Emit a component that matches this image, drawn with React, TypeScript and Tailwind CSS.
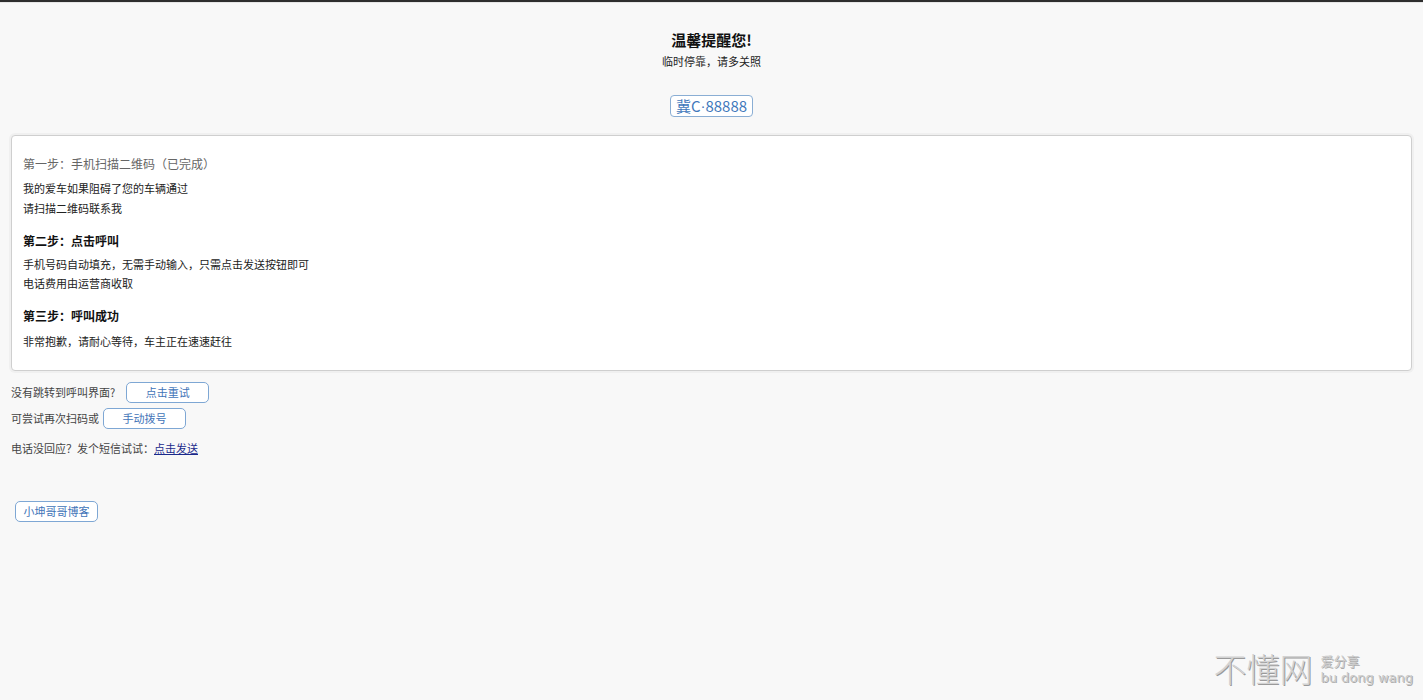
import React from "react";

const font = { fontFamily: '"Noto Sans CJK SC", "Noto Sans", sans-serif' };

function Btn({ children, className = "" }: { children: React.ReactNode; className?: string }) {
  return (
    <button
      className={
        "h-[21px] w-[83px] rounded-[5px] border border-[#7ea7d4] bg-white text-[11px] leading-[19px] text-[#3f74b8] " +
        className
      }
    >
      {children}
    </button>
  );
}

export default function App() {
  return (
    <div className="min-h-[700px] w-full bg-[#f8f8f8] text-[#222] relative overflow-hidden" style={font}>
      <div className="h-[2px] bg-[#2e2e2e]" />
      <div className="h-[1px] bg-[#e6e6e6]" />
      <div className="flex flex-col items-center pt-[27px]">
        <div className="text-[15px] font-bold leading-[20px] text-[#111]">温馨提醒您!</div>
        <div className="mt-[1px] text-[11px] leading-[20px] text-[#222]">临时停靠，请多关照</div>
        <div className="mt-[24px] flex h-[22px] items-center rounded-[4px] border border-[#8aaed4] bg-white px-[5px] text-[15px] leading-[20px] text-[#3f78bb]">
          冀C<span style={{ fontFamily: '"Liberation Sans", sans-serif' }}>·</span>88888
        </div>
      </div>

      <div className="mx-[11px] mt-[18px] rounded-[4px] border border-[#cfcfcf] bg-white px-[11px] pt-[18px] pb-[19px] shadow-[0_0_0_2px_#f0f0f0]">
        <div className="text-[12px] leading-[20px] text-[#666]">第一步：手机扫描二维码（已完成）</div>
        <div className="mt-[4px] text-[11px] leading-[20px]">
          <div>我的爱车如果阻碍了您的车辆通过</div>
          <div>请扫描二维码联系我</div>
        </div>
        <div className="mt-[13px] text-[12px] font-bold leading-[20px] text-[#111]">第二步：点击呼叫</div>
        <div className="mt-[4px] text-[11px] leading-[19px]">
          <div>手机号码自动填充，无需手动输入，只需点击发送按钮即可</div>
          <div>电话费用由运营商收取</div>
        </div>
        <div className="mt-[13px] text-[12px] font-bold leading-[20px] text-[#111]">第三步：呼叫成功</div>
        <div className="mt-[5px] text-[11px] leading-[20px]">非常抱歉，请耐心等待，车主正在速速赶往</div>
      </div>

      <div className="px-[11px] text-[11px] text-[#444]">
        <div className="mt-[11px] flex items-center gap-[11px]">
          <span>没有跳转到呼叫界面?</span>
          <Btn>点击重试</Btn>
        </div>
        <div className="mt-[5px] flex items-center gap-[4px]">
          <span>可尝试再次扫码或</span>
          <Btn>手动拨号</Btn>
        </div>
        <div className="mt-[9px] leading-[20px]">
          电话没回应？发个短信试试：<a className="text-[#1b2a8c] underline">点击发送</a>
        </div>
        <div className="mt-[43px] pl-[4px]">
          <Btn>小坤哥哥博客</Btn>
        </div>
      </div>

      <div className="absolute right-[10px] bottom-[13px] flex items-end gap-[8px] select-none">
        <span
          className="text-[33px] leading-[38px] text-[#d2d2d2]"
          style={{ fontWeight: 300, textShadow: "1px 1px 0 #9a9a9a" }}
        >
          不懂网
        </span>
        <div className="flex flex-col pb-[1px] text-[#cbcbcb]">
          <span className="text-[13px] leading-[17px]" style={{ textShadow: "1px 1px 0 #aaa" }}>爱分享</span>
          <span
            className="text-[13px] leading-[17px]"
            style={{ fontFamily: '"DejaVu Sans", sans-serif', textShadow: "1px 1px 0 #aaa" }}
          >
            bu dong wang
          </span>
        </div>
      </div>
    </div>
  );
}
